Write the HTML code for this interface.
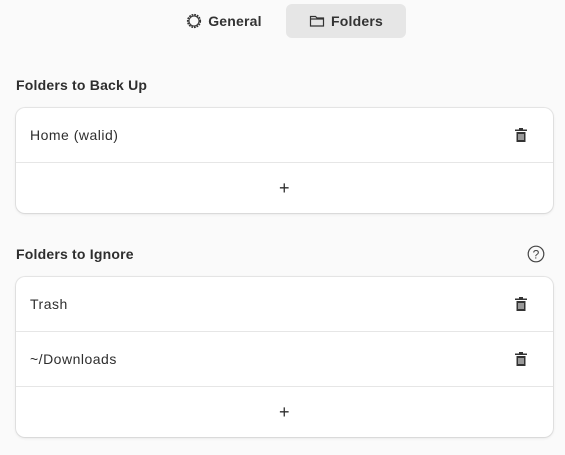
<html><head><style>
body{margin:0;width:565px;height:455px;background:#fafafa;font-family:"Liberation Sans",sans-serif;color:#2e2e2e;position:relative;overflow:hidden}
.tab{position:absolute;top:4px;height:34px;display:flex;align-items:center;justify-content:center;font-weight:bold;font-size:14px;color:#333;border-radius:6px;letter-spacing:.2px}
.h{position:absolute;left:16px;font-weight:bold;font-size:14px;color:#2e2e2e;letter-spacing:.2px}
.card{position:absolute;left:16px;width:537px;background:#fff;border-radius:9px;box-shadow:0 0 0 1px rgba(0,0,0,.07),0 1px 3px rgba(0,0,0,.1);overflow:hidden}
.row{height:54px;border-bottom:1px solid #e6e6e6;display:flex;align-items:center;padding-left:14px;font-size:14px;position:relative;letter-spacing:.5px}
.row.add{border-bottom:none;height:50px;justify-content:center;padding:0;font-size:18px;font-weight:300}
.trash{position:absolute;right:25px;top:19px}
</style></head><body>
<div class="tab" style="left:176px;width:96px"><svg width="16" height="16" viewBox="0 0 16 16" style="margin-right:6px"><circle cx="8" cy="8" r="6.3" fill="none" stroke="#333" stroke-width="1.6" stroke-dasharray="1.8 0.9"/><circle cx="8" cy="8" r="5" fill="none" stroke="#333" stroke-width="1"/></svg>General</div>
<div class="tab" style="left:286px;width:120px;background:#e6e6e6"><svg width="16" height="16" viewBox="0 0 16 16" style="margin-right:6px"><path d="M1.5 3.5h5l1.5 1.5h6.5v8h-13z M1.5 6h13" fill="none" stroke="#333" stroke-width="1.2"/></svg>Folders</div>
<div class="h" style="top:77px">Folders to Back Up</div>
<div class="card" style="top:108px">
<div class="row">Home (walid)<svg class="trash" width="14" height="16" viewBox="0 0 14 16"><path d="M5 1h4v1.5h4v1.5H1V2.5h4z M2.5 5h9v10h-9z" fill="#333"/><path d="M5 7v6M7 7v6M9 7v6" stroke="#fff" stroke-width="1"/></svg></div>
<div class="row add">+</div></div>
<div class="h" style="top:246px">Folders to Ignore</div>
<svg style="position:absolute;left:527px;top:245px" width="18" height="18" viewBox="0 0 18 18"><circle cx="9" cy="9" r="7.8" fill="none" stroke="#444" stroke-width="1.2"/><text x="9" y="13.5" font-size="12" text-anchor="middle" fill="#444" font-family="Liberation Sans">?</text></svg>
<div class="card" style="top:277px">
<div class="row">Trash<svg class="trash" width="14" height="16" viewBox="0 0 14 16"><path d="M5 1h4v1.5h4v1.5H1V2.5h4z M2.5 5h9v10h-9z" fill="#333"/><path d="M5 7v6M7 7v6M9 7v6" stroke="#fff" stroke-width="1"/></svg></div>
<div class="row">~/Downloads<svg class="trash" width="14" height="16" viewBox="0 0 14 16"><path d="M5 1h4v1.5h4v1.5H1V2.5h4z M2.5 5h9v10h-9z" fill="#333"/><path d="M5 7v6M7 7v6M9 7v6" stroke="#fff" stroke-width="1"/></svg></div>
<div class="row add">+</div></div>
</body></html>
